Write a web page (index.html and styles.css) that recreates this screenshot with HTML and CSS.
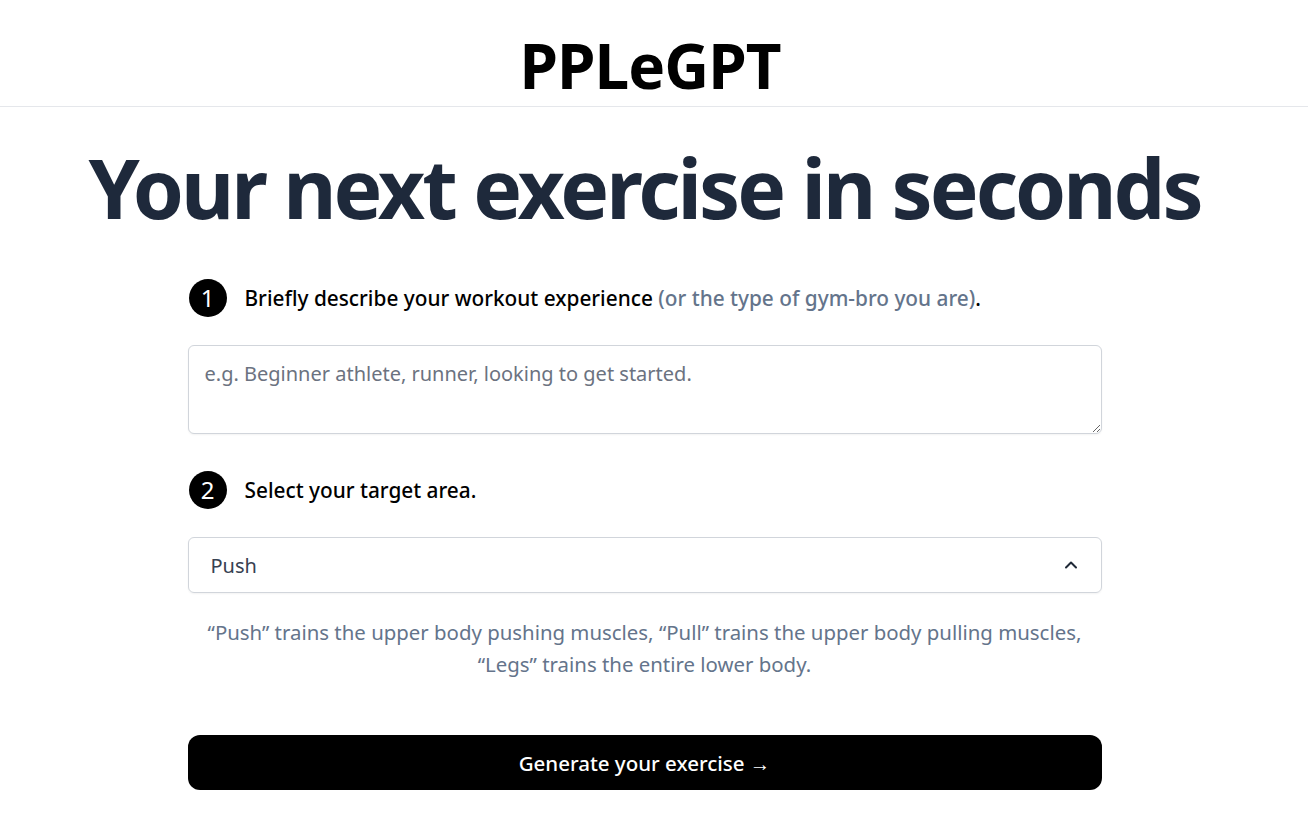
FILE: index.html
```html
<!DOCTYPE html>
<html lang="en">
<head>
<meta charset="utf-8">
<title>PPLeGPT</title>
<link rel="stylesheet" href="styles.css">
</head>
<body>
<header class="site-header">
  <h1 class="logo">PPLeGPT</h1>
</header>
<main class="main">
  <h2 class="hero">Your next exercise in seconds</h2>
  <div class="form">
    <div class="step">
      <span class="step-num">1</span>
      <p class="step-label">Briefly describe your workout experience <span class="muted">(or the type of gym-bro you are)</span>.</p>
    </div>
    <textarea class="textarea" rows="3" placeholder="e.g. Beginner athlete, runner, looking to get started."></textarea>
    <div class="step step-2">
      <span class="step-num">2</span>
      <p class="step-label">Select your target area.</p>
    </div>
    <div class="select">
      <span class="select-value">Push</span>
      <svg class="chevron" width="20" height="20" viewBox="0 0 20 20" fill="none" stroke="#1f2937" stroke-width="2" stroke-linecap="round" stroke-linejoin="round"><path d="M5 12.5 L10 7.5 L15 12.5"/></svg>
    </div>
    <p class="hint">“Push” trains the upper body pushing muscles, “Pull” trains the upper body pulling muscles, “Legs” trains the entire lower body.</p>
    <button class="btn" type="button">Generate your exercise →</button>
  </div>
</main>
</body>
</html>
```
FILE: styles.css
```css
* { box-sizing: border-box; }
body {
  margin: 0;
  font-family: "Noto Sans", "Open Sans", sans-serif;
  color: #000;
  background: #fff;
}
.site-header {
  height: 107px;
  border-bottom: 1px solid #e5e7eb;
  display: flex;
  justify-content: center;
  align-items: flex-start;
  padding-top: 34px;
  padding-right: 8px;
}
.logo {
  margin: 0;
  font-size: 62px;
  font-weight: 700;
  letter-spacing: -1px;
  line-height: 1;
}
.main {
  padding-right: 19px;
  display: flex;
  flex-direction: column;
  align-items: center;
}
.hero {
  margin: 33px 0 0;
  font-size: 82px;
  font-weight: 700;
  line-height: 1.15;
  color: #1e293b;
  letter-spacing: -3px;
  white-space: nowrap;
}
.form {
  width: 914px;
  margin-top: 45px;
  display: flex;
  flex-direction: column;
}
.step {
  display: flex;
  align-items: center;
  gap: 18px;
}
.step-num {
  width: 38px;
  height: 38px;
  flex: none;
  border-radius: 50%;
  background: #000;
  color: #fff;
  display: flex;
  align-items: center;
  justify-content: center;
  font-size: 24px;
  line-height: 1;
  margin-left: 1px;
}
.step-label {
  margin: 0;
  font-size: 20.8px;
  font-weight: 500;
}
.muted { color: #64748b; }
.textarea {
  margin-top: 28px;
  width: 100%;
  height: 89px;
  border: 1px solid #d1d5db;
  border-radius: 6px;
  padding: 14px 16px;
  font-family: inherit;
  font-size: 20px;
  line-height: 1.4;
  color: #111827;
  box-shadow: 0 1px 2px rgba(0,0,0,0.05);
}
.textarea::placeholder { color: #6b7280; }
.step-2 { margin-top: 37px; }
.select {
  margin-top: 28px;
  height: 56px;
  border: 1px solid #d1d5db;
  border-radius: 6px;
  display: flex;
  align-items: center;
  justify-content: space-between;
  padding: 0 20px 0 22px;
  font-size: 20px;
  color: #374151;
  box-shadow: 0 1px 2px rgba(0,0,0,0.05);
}
.hint {
  margin: 23px 0 0;
  text-align: center;
  font-size: 20.4px;
  line-height: 32px;
  color: #64748b;
  padding: 0 10px;
}
.btn {
  margin-top: 55px;
  height: 55px;
  border: 0;
  border-radius: 12px;
  background: #000;
  color: #fff;
  font-family: inherit;
  font-size: 20.5px;
  font-weight: 500;
}
```
